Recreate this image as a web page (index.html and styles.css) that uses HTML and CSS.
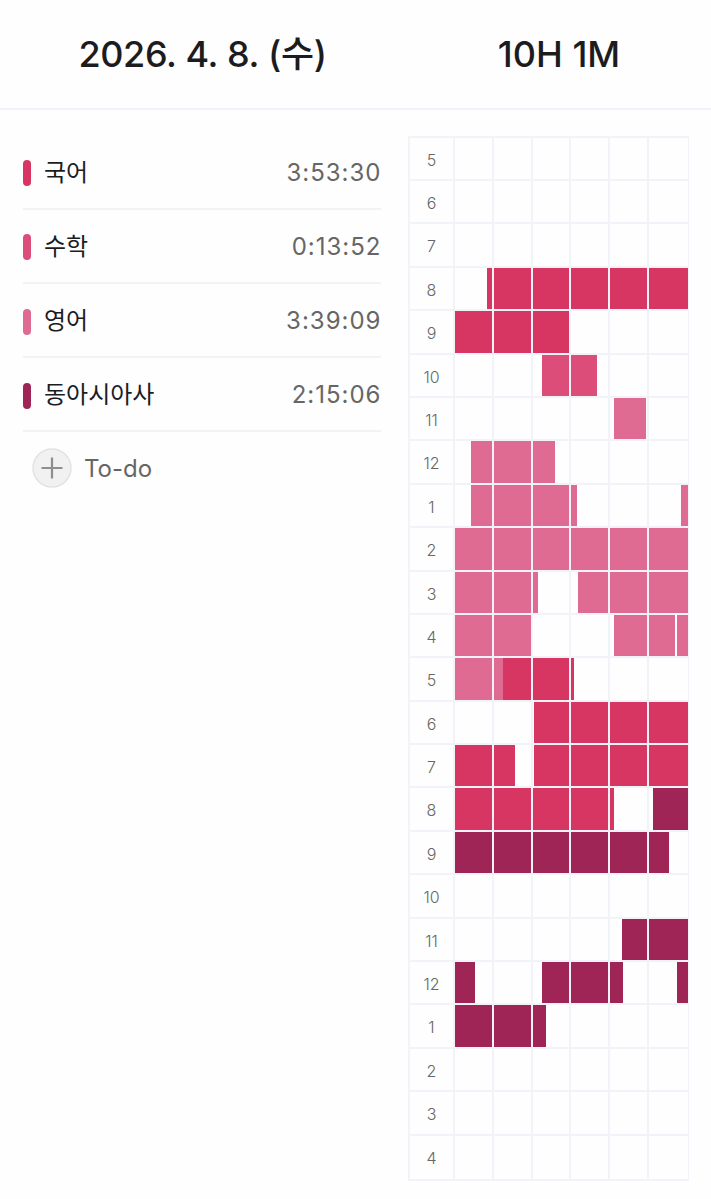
FILE: index.html
```
<!DOCTYPE html>
<html lang="ko">

<head>
    <meta charset="UTF-8">
    <meta name="viewport" content="width=device-width, initial-scale=1.0">
    <title>2026. 4. 8. (수)</title>
    <link rel="stylesheet" href="styles.css">
</head>

<body>
    <header class="header">
        <h1 class="date">2026. 4. 8. (수)</h1>
        <div class="total">10H 1M</div>
    </header>
    <main class="planner">
        <section class="subjects">
            <div class="subject">
                <span class="mark korean"></span>
                <span class="name">국어</span>
                <span class="time">3:53:30</span>
            </div>
            <div class="subject">
                <span class="mark math"></span>
                <span class="name">수학</span>
                <span class="time">0:13:52</span>
            </div>
            <div class="subject">
                <span class="mark english"></span>
                <span class="name">영어</span>
                <span class="time">3:39:09</span>
            </div>
            <div class="subject">
                <span class="mark history"></span>
                <span class="name">동아시아사</span>
                <span class="time">2:15:06</span>
            </div>
            <div class="todo">
                <svg class="plus" width="40" height="40" viewBox="0 0 40 40">
                    <circle cx="20" cy="20" r="19" fill="#f1f1f1" stroke="#e2e2e2" stroke-width="1.4" />
                    <path d="M20 9.5v21M9.5 20h21" stroke="#8e8e8e" stroke-width="2.2" />
                </svg>
                <span>To-do</span>
            </div>
        </section>

        <!-- --from / --to: 시작, 끝 (분) -->
        <section class="timetable">
            <div class="hour"><span class="label">5</span><div class="track"></div></div>
            <div class="hour"><span class="label">6</span><div class="track"></div></div>
            <div class="hour"><span class="label">7</span><div class="track"></div></div>
            <div class="hour"><span class="label">8</span><div class="track">
                <i class="bar korean" style="--from:8.25;--to:60"></i>
            </div></div>
            <div class="hour"><span class="label">9</span><div class="track">
                <i class="bar korean" style="--from:0;--to:29.7"></i>
            </div></div>
            <div class="hour"><span class="label">10</span><div class="track">
                <i class="bar math" style="--from:22.5;--to:36.6"></i>
            </div></div>
            <div class="hour"><span class="label">11</span><div class="track">
                <i class="bar english" style="--from:40.9;--to:49.25"></i>
            </div></div>
            <div class="hour"><span class="label">12</span><div class="track">
                <i class="bar english" style="--from:4.15;--to:25.8"></i>
            </div></div>
            <div class="hour"><span class="label">1</span><div class="track">
                <i class="bar english" style="--from:4.15;--to:31.4"></i>
                <i class="bar english" style="--from:58.25;--to:60"></i>
            </div></div>
            <div class="hour"><span class="label">2</span><div class="track">
                <i class="bar english" style="--from:0;--to:60"></i>
            </div></div>
            <div class="hour"><span class="label">3</span><div class="track">
                <i class="bar english" style="--from:0;--to:21.5"></i>
                <i class="bar english" style="--from:31.7;--to:60"></i>
            </div></div>
            <div class="hour"><span class="label">4</span><div class="track">
                <i class="bar english" style="--from:0;--to:19.5"></i>
                <i class="bar english" style="--from:40.9;--to:56.75"></i>
                <i class="bar english" style="--from:57.2;--to:60"></i>
            </div></div>
            <div class="hour"><span class="label">5</span><div class="track">
                <i class="bar english" style="--from:0;--to:12.25"></i>
                <i class="bar korean" style="--from:12.25;--to:30.7"></i>
            </div></div>
            <div class="hour"><span class="label">6</span><div class="track">
                <i class="bar korean" style="--from:20.45;--to:60"></i>
            </div></div>
            <div class="hour"><span class="label">7</span><div class="track">
                <i class="bar korean" style="--from:0;--to:15.4"></i>
                <i class="bar korean" style="--from:20.45;--to:60"></i>
            </div></div>
            <div class="hour"><span class="label">8</span><div class="track">
                <i class="bar korean" style="--from:0;--to:40.95"></i>
                <i class="bar history" style="--from:51.1;--to:60"></i>
            </div></div>
            <div class="hour"><span class="label">9</span><div class="track">
                <i class="bar history" style="--from:0;--to:55.2"></i>
            </div></div>
            <div class="hour"><span class="label">10</span><div class="track"></div></div>
            <div class="hour"><span class="label">11</span><div class="track">
                <i class="bar history" style="--from:43.05;--to:60"></i>
            </div></div>
            <div class="hour"><span class="label">12</span><div class="track">
                <i class="bar history" style="--from:0;--to:5.15"></i>
                <i class="bar history" style="--from:22.5;--to:43.25"></i>
                <i class="bar history" style="--from:57.2;--to:60"></i>
            </div></div>
            <div class="hour"><span class="label">1</span><div class="track">
                <i class="bar history" style="--from:0;--to:23.5"></i>
            </div></div>
            <div class="hour"><span class="label">2</span><div class="track"></div></div>
            <div class="hour"><span class="label">3</span><div class="track"></div></div>
            <div class="hour"><span class="label">4</span><div class="track"></div></div>
        </section>
    </main>
</body>

</html>
```
FILE: styles.css
```
* {
    box-sizing: border-box;
}

body {
    margin: 0;
    background: #fefefe;
    color: #1c1c1e;
    font-family: Inter, "Noto Sans CJK KR", sans-serif;
}

.header {
    display: grid;
    grid-template-columns: 405px 1fr;
    align-items: center;
    height: 110px;
    border-bottom: 2px solid #f2f3f9;
    text-align: center;
    font-size: 36px;
    font-weight: 450;
    line-height: 108px;
}

.date {
    margin: 0;
    font-size: 36px;
    font-weight: 450;
    letter-spacing: -0.35px;
}

.total {
    padding-left: 2px;
}

.planner {
    display: grid;
    grid-template-columns: 358px 281px;
    column-gap: 27px;
    padding: 25.6px 0 0 23px;
    align-items: start;
}

.subject {
    display: flex;
    align-items: center;
    height: 74.2px;
    border-bottom: 2px solid #f3f3f5;
    font-size: 24px;
}

.mark {
    width: 8px;
    height: 26px;
    margin: 3px 13px 0 0;
    border-radius: 4px;
}

.name {
    flex: 1;
    margin-top: -3px;
}

.time {
    margin: 1px -0.5px 0 0;
    color: #666;
    letter-spacing: 1px;
}

.todo {
    display: flex;
    align-items: center;
    gap: 12px;
    height: 72px;
    padding-left: 9px;
    color: #666;
    font-size: 24px;
}

.timetable {
    border: solid #f2f2f9;
    border-width: 0 1px 2px 2px;
}

.hour {
    display: grid;
    grid-template-columns: 45px 1fr;
    grid-template-rows: 100%;
    height: 43.4px;
    border-top: 2px solid #f2f2f9;
}

.hour:last-child {
    height: 45px;
}

.label {
    border-right: 2px solid #f2f2f9;
    color: #666;
    font-size: 16px;
    font-weight: 350;
    line-height: 45px;
    text-align: center;
}

.track {
    position: relative;
    display: grid;
    grid-template-rows: 100%;
}

/* 10분 단위 세로선 */
.track::after {
    content: "";
    position: absolute;
    inset: 0;
    background: repeating-linear-gradient(to right, transparent 0 36.75px, #f2f2f9 36.75px 38.8px);
    background-size: 230px 100%;
    background-repeat: no-repeat;
}

.bar {
    grid-area: 1 / 1;
    width: calc((var(--to) - var(--from)) / 60 * 100%);
    margin-left: calc(var(--from) / 60 * 100%);
}

.korean {
    background: #d83662;
}

.math {
    background: #dc4e79;
}

.english {
    background: #df6b93;
}

.history {
    background: #9e2556;
}
```
